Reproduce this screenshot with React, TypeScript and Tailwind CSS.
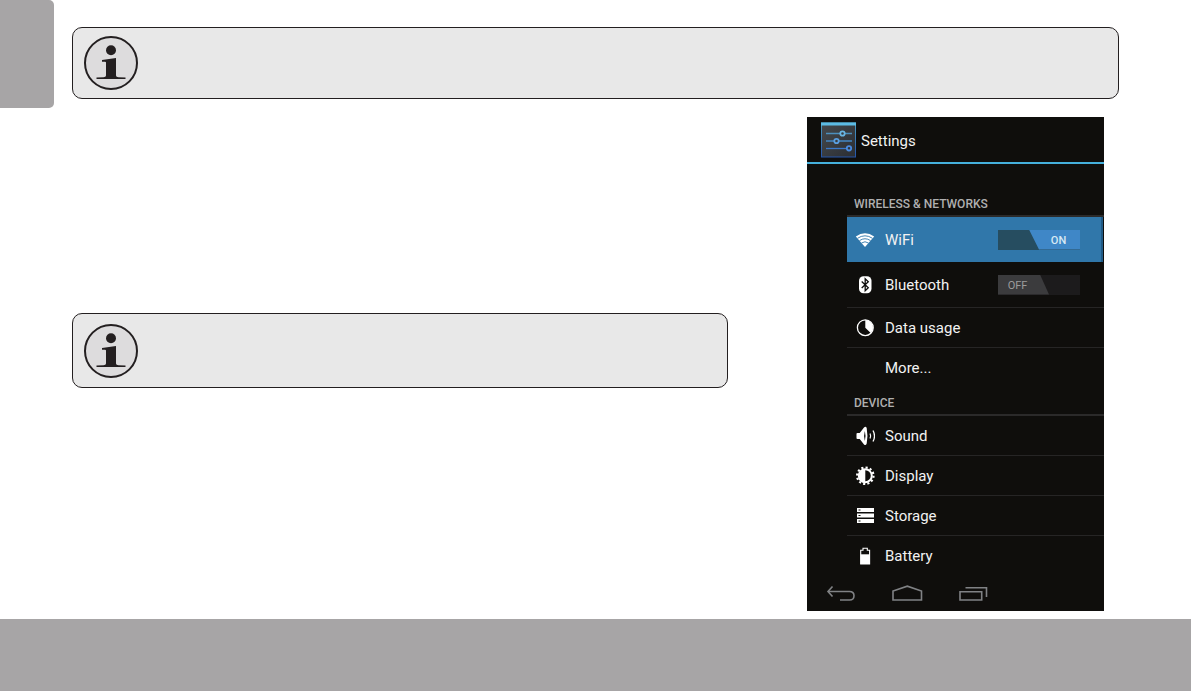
import { useState } from "react";
import type { ReactNode } from "react";

function InfoIcon() {
  return (
    <svg width="56" height="56" viewBox="0 0 56 56" className="shrink-0" aria-hidden="true">
      <circle cx="28" cy="28" r="26" fill="#dddcdd" stroke="#231f20" strokeWidth="2" />
      <circle cx="28" cy="15.300" r="5" fill="#231f20" />
      <path d="M19 25 L33 23 V40.500 Q33 42 35.500 42.200 L42.500 42.600 V44 H13.500 V42.600 L20.500 42.200 Q23 42 23 40.500 V27.500 Q23 26.700 22 26.700 H19 Z" fill="#231f20" />
    </svg>
  );
}

function Notice({ size }: { size: string }) {
  return (
    <aside
      aria-label="Information"
      className={`flex items-center rounded-[10px] border border-[#231f20] bg-[#e8e8e8] px-[10px] ${size}`}
    >
      <InfoIcon />
    </aside>
  );
}

function SettingsIcon() {
  return (
    <svg width="36" height="36" viewBox="0 0 36 36" aria-hidden="true">
      <defs>
        <linearGradient id="plate" x1="0" y1="0" x2="1" y2="1">
          <stop offset="0" stopColor="#45494d" />
          <stop offset="1" stopColor="#2b2e33" />
        </linearGradient>
        <linearGradient id="edge" x1="0" y1="0" x2="0" y2="1">
          <stop offset="0" stopColor="#4b9dc0" />
          <stop offset="1" stopColor="#2453a8" />
        </linearGradient>
      </defs>
      <rect x="0.500" y="1" width="34" height="34" fill="url(#plate)" stroke="url(#edge)" />
      <rect x="0" y="0.500" width="35" height="3" fill="#5cbbe4" />
      <g fill="none" strokeWidth="1.300">
        <path d="M5 11.500h14M24 11.500h7" stroke="#4c8fbd" />
        <path d="M5 19h8M18 19h13" stroke="#4386c4" />
        <path d="M5 26.500h21" stroke="#3b78c8" />
        <circle cx="21.500" cy="11.500" r="2.200" stroke="#69b6e4" strokeWidth="1.800" />
        <circle cx="15.500" cy="19" r="2.200" stroke="#5a9fe0" strokeWidth="1.800" />
        <circle cx="28" cy="26.300" r="2.200" stroke="#4a8be0" strokeWidth="1.800" />
      </g>
    </svg>
  );
}

function RowIcon({ children }: { children?: ReactNode }) {
  return (
    <svg width="20" height="20" viewBox="0 0 20 20" fill="#fff" className="shrink-0" aria-hidden="true">
      {children}
    </svg>
  );
}

const wifiIcon = (
  <g>
    <path d="M0.800 6.500Q10 0 19.200 6.500L10 17Z" />
    <g fill="none" stroke="#3077aa" strokeWidth="0.900">
      <path d="M2.500 8.300Q10 3.300 17.500 8.300" />
      <path d="M4.500 10.600Q10 6.900 15.500 10.600" />
      <path d="M6.500 13Q10 10.500 13.500 13" />
    </g>
  </g>
);

const bluetoothIcon = (
  <g>
    <rect x="4" y="1.200" width="12.500" height="17" rx="4.500" />
    <path d="M6.700 6.500L13.300 12.800L10.200 15.800V3.800L13.300 6.700L6.700 13" fill="none" stroke="#0f0e0d" strokeWidth="1.300" />
  </g>
);

const dataIcon = (
  <g>
    <circle cx="10.300" cy="9.700" r="7.900" fill="none" stroke="#fff" strokeWidth="1.300" />
    <path d="M10.300 9.700V2A7.700 7.700 0 0 1 15.700 15.100Z" />
  </g>
);

const soundIcon = (
  <g>
    <path d="M1.500 7.800Q1.500 7 2.500 7H4.700L9 1.500Q10.800 0 11.700 2Q13.200 10 11.700 17.500Q10.800 20 9 18.500L4.700 13H2.500Q1.500 13 1.500 12.200Z" />
    <path d="M9.800 5Q11.300 10 9.800 15Q8.300 10 9.800 5Z" fill="#0f0e0d" />
    <g fill="none" stroke="#fff">
      <path d="M15 7.500Q16.300 10 15 12.500" strokeWidth="1.200" />
      <path d="M18 4.500Q21 10 18 15.500" strokeWidth="1.300" />
    </g>
  </g>
);

const displayIcon = (
  <g>
    <circle cx="10.300" cy="9.700" r="8.200" fill="none" stroke="#fff" strokeWidth="2.200" strokeDasharray="2.146 2.146" />
    <circle cx="10.300" cy="9.700" r="6.500" fill="none" stroke="#fff" strokeWidth="2" />
    <path d="M10.300 3.400A6.300 6.300 0 0 0 10.300 16Z" />
  </g>
);

const storageIcon = (
  <g>
    <path d="M2 2h17v4H2zM2 7.500h17v4H2zM2 13h17v4H2z" />
    <path d="M3.500 3.500h2v1h-2zM3.500 9h2v1h-2zM3.500 14.500h2v1h-2z" fill="#0f0e0d" />
  </g>
);

const batteryIcon = (
  <g>
    <path d="M5.700 18V4.300H8V2.200H12.300V4.300H14.600V18Z" fill="none" stroke="#fff" strokeWidth="1.100" />
    <path d="M5.500 8.300h9.300V18H5.500z" />
  </g>
);

function Toggle({ id, name, initial }: { id: string; name: string; initial: boolean }) {
  const [on, setOn] = useState(initial);
  return (
    <button
      id={id}
      type="button"
      role="switch"
      aria-checked={on}
      aria-label={name}
      onClick={() => setOn(!on)}
      className={`flex h-5 w-[82px] text-[11px] font-medium ${on ? "justify-end bg-[#264d60]" : "bg-[#1c1b1c]"}`}
    >
      {on ? (
        <span className="flex h-full w-[51px] items-center justify-center bg-[#3f87c7] pl-2 pt-[2px] text-[#d7e9f4] [clip-path:polygon(0_0,100%_0,100%_100%,10px_100%)]">
          ON
        </span>
      ) : (
        <span className="flex h-full w-[51px] items-center justify-center bg-[#3b3b3d] pr-3 pt-[2px] font-normal text-[#9b9b9b] [clip-path:polygon(0_0,42px_0,100%_100%,0_100%)]">
          OFF
        </span>
      )}
    </button>
  );
}

function Heading({ children }: { children: ReactNode }) {
  return (
    <h2 className="flex h-7 items-center border-b-2 border-[#2b2a2a] pl-[7px] pt-1 text-[12px] font-medium text-[#b0b0b0]">
      {children}
    </h2>
  );
}

function LinkRow({ label, icon, last }: { label: string; icon?: ReactNode; last?: boolean }) {
  return (
    <li className={last ? "h-10" : "h-10 border-b border-[#262525]"}>
      <button type="button" className="flex h-full w-full items-center gap-[10px] pl-2 text-left">
        <RowIcon>{icon}</RowIcon>
        {label}
      </button>
    </li>
  );
}

function Phone() {
  return (
    <section aria-label="Settings" className="flex w-[297px] shrink-0 flex-col bg-[#0f0e0c] font-[Roboto,sans-serif] text-[15px] leading-5 text-[#f2f2f2]">
      <header className="flex h-[47px] items-center gap-1 border-b-2 border-[#45b0dc] pl-[14px]">
        <SettingsIcon />
        <h1 className="pt-[2px]">Settings</h1>
      </header>
      <div className="ml-10 pt-[25px]">
        <Heading>WIRELESS &amp; NETWORKS</Heading>
        <ul>
          <li className="mr-[1px] flex h-[45px] items-center gap-[10px] border-r-2 border-[#215b86] bg-[#3077aa] pl-2 pr-[21px]">
            <RowIcon>{wifiIcon}</RowIcon>
            <label htmlFor="wifi" className="flex-1">WiFi</label>
            <Toggle id="wifi" name="WiFi" initial />
          </li>
          <li className="flex h-[46px] items-center gap-[10px] border-b border-[#262525] pl-2 pr-[24px]">
            <RowIcon>{bluetoothIcon}</RowIcon>
            <label htmlFor="bluetooth" className="flex-1">Bluetooth</label>
            <Toggle id="bluetooth" name="Bluetooth" initial={false} />
          </li>
          <LinkRow label="Data usage" icon={dataIcon} />
          <LinkRow label="More..." last />
        </ul>
        <Heading>DEVICE</Heading>
        <ul>
          <LinkRow label="Sound" icon={soundIcon} />
          <LinkRow label="Display" icon={displayIcon} />
          <LinkRow label="Storage" icon={storageIcon} />
          <LinkRow label="Battery" icon={batteryIcon} last />
        </ul>
      </div>
      <nav aria-label="System" className="flex h-[35px] items-center gap-[35px] pl-[18px]">
        <button type="button" aria-label="Back">
          <svg width="32" height="18" viewBox="0 0 32 18" fill="none" stroke="#808285" strokeWidth="1.600">
            <path d="M3 6.500H24.500Q29 6.500 29 10.800T24.500 15H15" />
            <path d="M7.500 1.500L3 6.500L7.500 11.500" />
          </svg>
        </button>
        <button type="button" aria-label="Home">
          <svg width="32" height="18" viewBox="0 0 32 18" fill="none" stroke="#808285" strokeWidth="1.600">
            <path d="M1 15V6L15.300 1.200L29.500 6V15Z" />
          </svg>
        </button>
        <button type="button" aria-label="Recent apps">
          <svg width="32" height="18" viewBox="0 0 32 18" fill="none" stroke="#808285" strokeWidth="1.600">
            <path d="M1 6.800H22.700V15H1Z" />
            <path d="M6.500 2.700H27.500V12" />
          </svg>
        </button>
      </nav>
    </section>
  );
}

export default function App() {
  return (
    <div className="flex min-h-screen flex-col bg-white">
      <div className="flex pb-2">
        <div className="h-[108px] w-[54px] shrink-0 rounded-r-[5px] bg-[#a7a5a6]" />
        <main className="flex flex-1 flex-col gap-[18px] pl-[18px] pr-[72px] pt-[27px]">
          <Notice size="h-[72px]" />
          <div className="flex gap-[79px] pr-[15px]">
            <div className="flex-1 pt-[196px]">
              <Notice size="h-[75px]" />
            </div>
            <Phone />
          </div>
        </main>
      </div>
      <footer className="min-h-[72px] flex-1 bg-[#a7a5a6]" />
    </div>
  );
}
